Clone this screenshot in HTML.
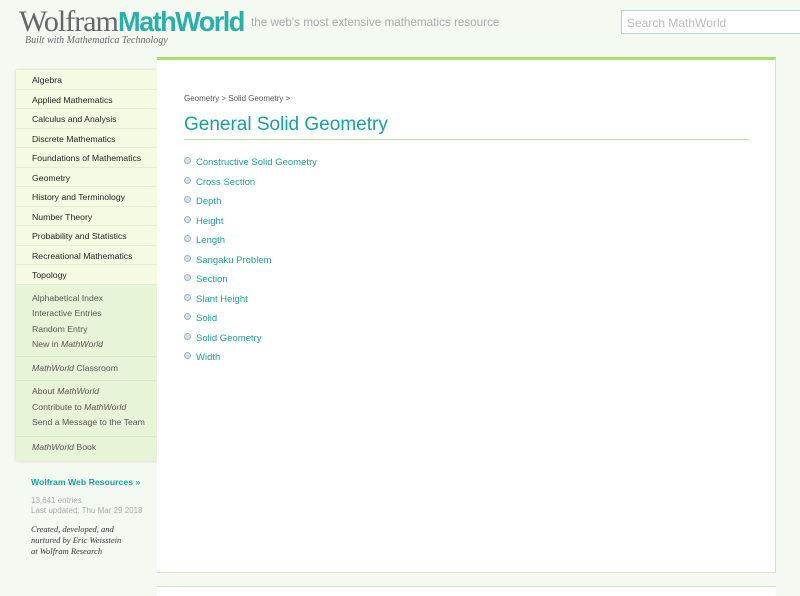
<!DOCTYPE html>
<html><head><meta charset="utf-8"><style>
*{margin:0;padding:0;box-sizing:border-box}
body{width:800px;height:588px;overflow:hidden;background:#f4f9f1;font-family:"Liberation Sans",sans-serif;position:relative}
.logo{position:absolute;left:19px;top:5px;font-size:30px;letter-spacing:-1px;white-space:nowrap;line-height:34px}
.logo .w{font-family:"Liberation Serif",serif;color:#666}
.logo .m{color:#2ab0ab;font-weight:bold;font-size:28px;letter-spacing:-1.6px;display:inline-block;transform:scaleX(0.97);transform-origin:left}
.built{position:absolute;left:25px;top:35px;font-family:"Liberation Serif",serif;font-style:italic;font-size:10px;color:#666}
.tag{position:absolute;left:251px;top:16px;font-size:11.7px;color:#aaa}
.search{position:absolute;left:621px;top:10px;width:185px;height:24px;border:1px solid #b5d3d8;background:#fff;color:#bbb;font-size:12px;padding:5px 5px}
.side{position:absolute;left:16px;top:70px;width:141px;height:391px;background:#e8f4d7;box-shadow:0 0 3px #ccc}
.nav div{height:19.5px;border-bottom:1px solid #e6edd7;background:#f5fbe2;font-size:8.7px;color:#222;padding:5px 0 0 16px}
.sec{border-bottom:1px solid #d9e7c6;padding:5px 0 5px 16px;font-size:8.7px;color:#555;line-height:15.5px}
.sec i{font-style:italic}
.main{position:absolute;left:157px;top:57px;width:619px;height:516px;background:#fff;border-top:3px solid #a6df6a;border-right:1px solid #ddd;border-bottom:1px solid #ddd}
.main2{position:absolute;left:157px;top:586px;width:619px;height:10px;background:#fff;border-top:1px solid #cde8c0}
.bc{position:absolute;left:27px;top:34px;font-size:8px;color:#555}
h1{position:absolute;left:27px;top:54px;font-weight:normal;font-size:19px;color:#13a39b}
.hr{position:absolute;left:27px;top:79px;width:565px;height:1px;background:#bde39a}
ul{position:absolute;left:27px;top:97px;list-style:none}
li{height:19.5px;font-size:9.5px;color:#1a9e97}
li:before{content:"";display:inline-block;width:5px;height:5px;border:1.5px solid #9bb;background:#dde;border-radius:50%;margin-right:5px;vertical-align:1px}
.wr{position:absolute;left:31px;top:477px;font-size:8.7px;font-weight:bold;color:#13a39b}
.info{position:absolute;left:31px;top:496px;font-size:8px;color:#aaa;line-height:10px}
.cred{position:absolute;left:31px;top:524px;font-family:"Liberation Serif",serif;font-style:italic;font-size:8.5px;color:#333;line-height:11px}
</style></head><body>
<div class="logo"><span class="w">Wolfram</span><span class="m">MathWorld</span></div>
<div class="built">Built with Mathematica Technology</div>
<div class="tag">the web's most extensive mathematics resource</div>
<div class="search">Search MathWorld</div>
<div class="side">
<div class="nav"><div>Algebra</div><div>Applied Mathematics</div><div>Calculus and Analysis</div><div>Discrete Mathematics</div><div>Foundations of Mathematics</div><div>Geometry</div><div>History and Terminology</div><div>Number Theory</div><div>Probability and Statistics</div><div>Recreational Mathematics</div><div>Topology</div></div>
<div class="sec" style="padding:6px 0 3px 16px">Alphabetical Index<br>Interactive Entries<br>Random Entry<br>New in <i>MathWorld</i></div>
<div class="sec" style="padding:4px 0 4px 16px"><i>MathWorld</i> Classroom</div>
<div class="sec" style="padding:3px 0 5px 16px">About <i>MathWorld</i><br>Contribute to <i>MathWorld</i><br>Send a Message to the Team</div>
<div class="sec" style="border:none;padding-top:3px"><i>MathWorld</i> Book</div>
</div>
<div class="wr">Wolfram Web Resources »</div>
<div class="info">13,641 entries<br>Last updated: Thu Mar 29 2018</div>
<div class="cred">Created, developed, and<br>nurtured by Eric Weisstein<br>at Wolfram Research</div>
<div class="main">
<div class="bc">Geometry &gt; Solid Geometry &gt;</div>
<h1>General Solid Geometry</h1>
<div class="hr"></div>
<ul><li>Constructive Solid Geometry</li><li>Cross Section</li><li>Depth</li><li>Height</li><li>Length</li><li>Sangaku Problem</li><li>Section</li><li>Slant Height</li><li>Solid</li><li>Solid Geometry</li><li>Width</li></ul>
</div>
<div class="main2"></div>
</body></html>
